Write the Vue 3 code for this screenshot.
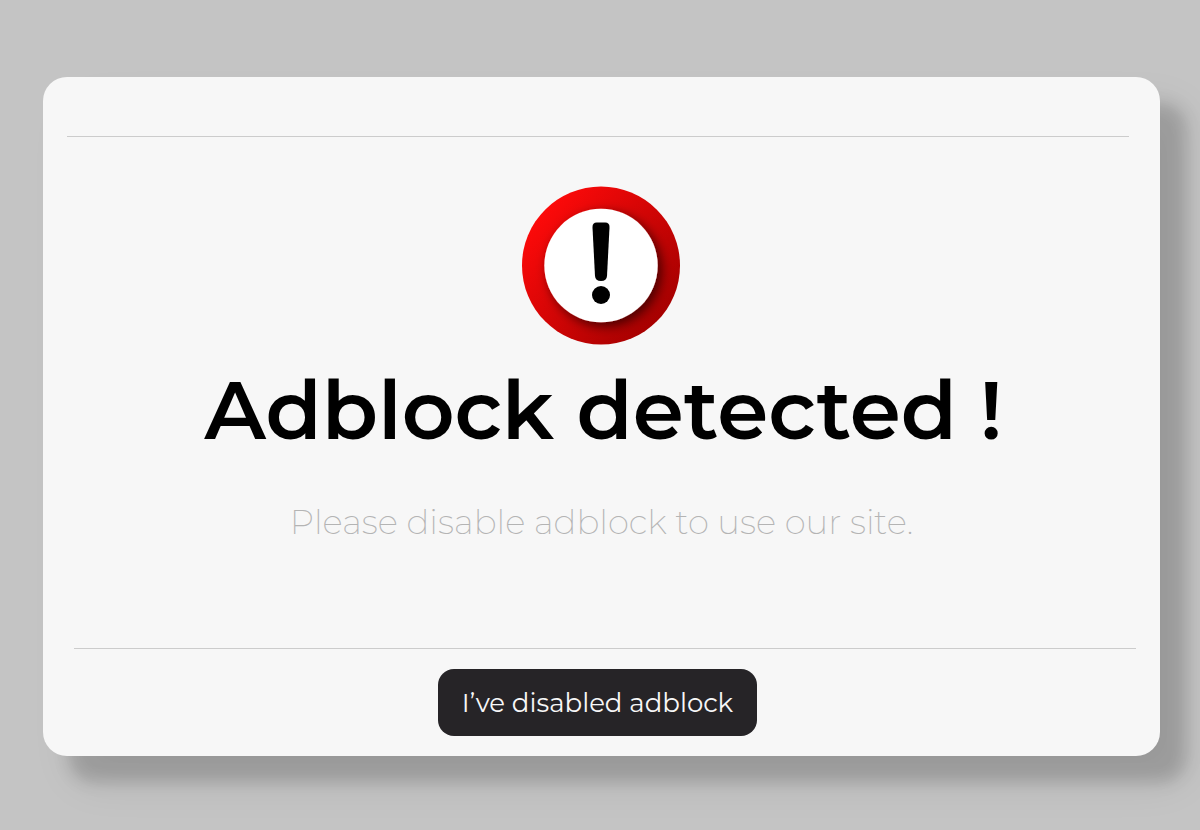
<script setup>
function recheck() {
  window.location.reload()
}
</script>

<template>
  <main class="page">
    <section class="card" role="alertdialog" aria-labelledby="title" aria-describedby="message">
      <hr class="rule rule-top" />
      <div class="content">
        <svg class="icon" viewBox="0 0 160 160" aria-hidden="true">
          <defs>
            <linearGradient id="ring" x1="0.1" y1="0.15" x2="0.9" y2="0.85">
              <stop offset="0" stop-color="#ff0a0a" />
              <stop offset="1" stop-color="#a40000" />
            </linearGradient>
            <filter id="shade" x="-20%" y="-20%" width="150%" height="150%">
              <feDropShadow dx="4" dy="4" stdDeviation="6" flood-color="#000" flood-opacity="0.62" />
            </filter>
          </defs>
          <circle cx="80" cy="79.500" r="79" fill="url(#ring)" />
          <circle cx="80" cy="79.500" r="56.7" fill="#fff" filter="url(#shade)" />
          <path
            d="M75.700 36.500H84.300Q88.700 36.500 88.500 41.500L86 90Q85.700 95 80 95Q74.300 95 74 90L71.500 41.500Q71.300 36.500 75.700 36.500Z"
          />
          <circle cx="80" cy="109" r="9" />
        </svg>
        <h1 id="title" class="title">Adblock detected !</h1>
        <p id="message" class="message">Please disable adblock to use our site.</p>
      </div>
      <hr class="rule rule-bottom" />
      <button class="action" type="button" @click="recheck">I’ve disabled adblock</button>
    </section>
  </main>
</template>

<style>
body {
  margin: 0;
  background: #c4c4c4;
}
</style>

<style scoped>
.page {
  box-sizing: border-box;
  min-height: 100vh;
  padding: 77px 40px 74px 43px;
  overflow: hidden;
  display: grid;
  background: #c4c4c4;
  font-family: Montserrat, Inter, "Open Sans", sans-serif;
}

.card {
  box-sizing: border-box;
  display: flex;
  flex-direction: column;
  align-items: center;
  padding: 59px 24px 20px;
  border-radius: 24px;
  background: #f7f7f7;
  box-shadow:
    26px 26px 16px rgba(0, 0, 0, 0.16),
    28px 28px 44px rgba(0, 0, 0, 0.07);
}

.rule {
  box-sizing: border-box;
  align-self: stretch;
  height: 1px;
  margin: 0;
  border: 0;
  background: #cccccc;
}

.rule-top {
  margin-right: 7px;
}

.rule-bottom {
  margin-left: 7px;
}

.content {
  flex: 1;
  display: flex;
  flex-direction: column;
  align-items: center;
  padding-top: 49px;
  text-align: center;
}

.icon {
  width: 160px;
  height: 160px;
}

.title {
  margin: 16px 0 0;
  padding-left: 4px;
  font-size: 82px;
  line-height: 96px;
  font-weight: 600;
  color: #000;
}

.message {
  margin: 40px 0 0;
  font-size: 34px;
  line-height: 48px;
  font-weight: 200;
  color: #b4b4b4;
}

.action {
  margin: 20px 8px 0 0;
  padding: 17px 24px 16px;
  border: 0;
  border-radius: 16px;
  background: #262427;
  color: #f7f7f7;
  font-family: inherit;
  font-size: 26px;
  line-height: 34px;
  font-weight: 400;
  cursor: pointer;
}
</style>
